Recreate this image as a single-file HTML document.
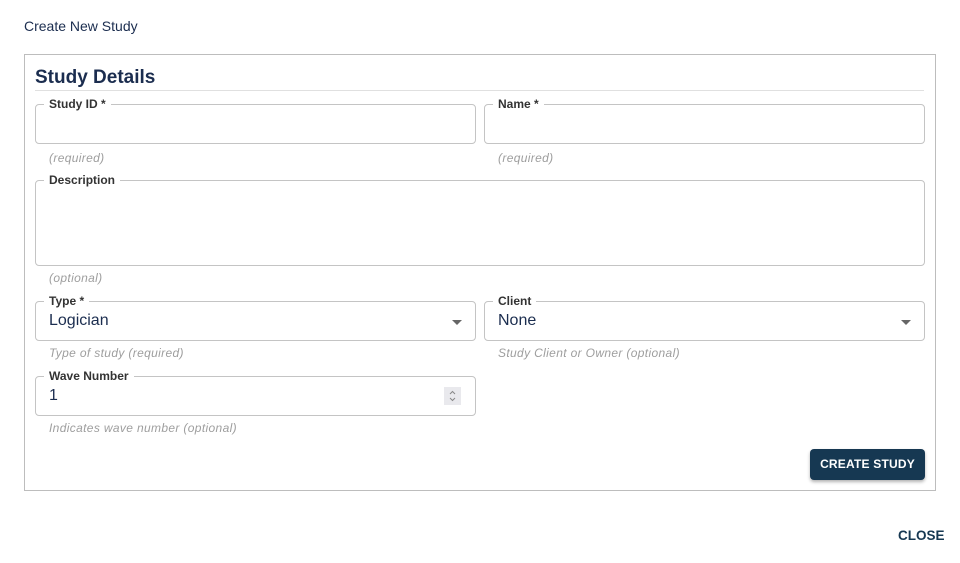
<!DOCTYPE html>
<html><head><style>
*{box-sizing:border-box;margin:0;padding:0}
body{width:960px;height:563px;background:#fff;font-family:"Liberation Sans",sans-serif;position:relative;overflow:hidden}
.a{position:absolute}
.t{left:24px;top:18px;font-size:14px;color:#1b2d4f}
.sec{left:24px;top:54px;width:912px;height:437px;border:1px solid #bdbdbd}
.h{left:35px;top:67px;font-size:19px;font-weight:bold;color:#1b2d4f}
.hl{left:35px;top:90px;width:889px;height:1px;background:#e0e0e0}
.f{border:1px solid #c4c4c4;border-radius:4px}
.lg{font-size:12px;font-weight:bold;color:#333;background:#fff;padding:0 5px;top:-8px;left:8px;position:absolute;line-height:14px}
.hp{font-size:12px;font-style:italic;color:#9e9e9e;letter-spacing:.35px}
.v{font-size:16px;color:#1b2d4f;position:absolute;left:13px;top:10px}
.ar{position:absolute;right:13px;top:18px;width:0;height:0;border-left:5px solid transparent;border-right:5px solid transparent;border-top:5px solid #666}
.btn{left:810px;top:449px;width:115px;height:31px;background:#163852;color:#fff;border-radius:4px;font-size:12px;font-weight:bold;text-align:center;line-height:31px;letter-spacing:.2px;box-shadow:0 2px 3px rgba(0,0,0,.3)}
.cl{left:898px;top:528px;font-size:13.5px;font-weight:bold;color:#163852;letter-spacing:0}
</style></head><body>
<div class="a t">Create New Study</div>
<div class="a sec"></div>
<div class="a h">Study Details</div>
<div class="a hl"></div>

<div class="a f" style="left:35px;top:104px;width:441px;height:40px"><span class="lg">Study ID *</span></div>
<div class="a hp" style="left:49px;top:151px">(required)</div>
<div class="a f" style="left:484px;top:104px;width:441px;height:40px"><span class="lg">Name *</span></div>
<div class="a hp" style="left:498px;top:151px">(required)</div>

<div class="a f" style="left:35px;top:180px;width:890px;height:86px"><span class="lg">Description</span></div>
<div class="a hp" style="left:49px;top:271px">(optional)</div>

<div class="a f" style="left:35px;top:301px;width:441px;height:40px"><span class="lg">Type *</span><span class="v">Logician</span><span class="ar"></span></div>
<div class="a hp" style="left:49px;top:346px">Type of study (required)</div>
<div class="a f" style="left:484px;top:301px;width:441px;height:40px"><span class="lg">Client</span><span class="v">None</span><span class="ar"></span></div>
<div class="a hp" style="left:498px;top:346px">Study Client or Owner (optional)</div>

<div class="a f" style="left:35px;top:376px;width:441px;height:40px"><span class="lg">Wave Number</span><span class="v">1</span>
<svg style="position:absolute;left:408px;top:10px" width="17" height="18"><rect width="17" height="18" fill="#e9e9ed"/><path d="M6 7l2.5-2.5L11 7M6 11l2.5 2.5L11 11" stroke="#888" fill="none" stroke-width="1"/></svg></div>
<div class="a hp" style="left:49px;top:421px">Indicates wave number (optional)</div>

<div class="a btn">CREATE STUDY</div>
<div class="a cl">CLOSE</div>
</body></html>
